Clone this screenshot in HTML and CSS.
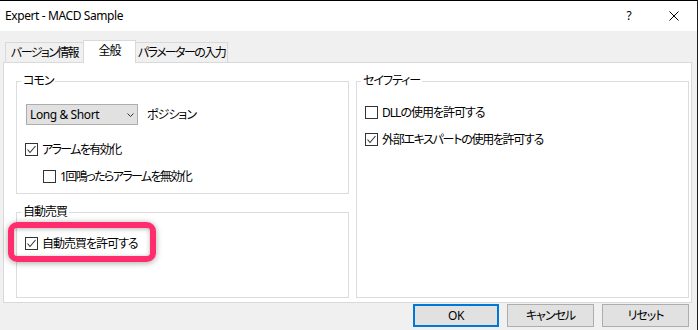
FILE: index.html
```html
<!DOCTYPE html>
<html lang="ja">
<head>
<meta charset="utf-8">
<title>Expert - MACD Sample</title>
<link rel="stylesheet" href="styles.css">
</head>
<body>
<div class="window">
  <div class="titlebar">
    <span class="title">Expert - MACD Sample</span>
    <span class="tb-btn help">?</span>
    <span class="tb-btn close"><svg width="10" height="10" viewBox="0 0 10 10"><path d="M0.5 0.5 L9.5 9.5 M9.5 0.5 L0.5 9.5" stroke="#000" stroke-width="1" fill="none"/></svg></span>
  </div>
  <div class="content">
    <div class="tabs">
      <div class="tab tab-version kana">バージョン情報</div>
      <div class="tab tab-general active ja">全般</div>
      <div class="tab tab-params kana">パラメーターの入力</div>
    </div>
    <div class="panel">
      <div class="col">
        <fieldset class="group group-common">
          <legend class="ja">コモン</legend>
          <div class="select-row">
            <div class="select"><span>Long &amp; Short</span><svg width="7" height="4" viewBox="0 0 7 4"><path d="M0.5 0.5 L3.5 3.5 L6.5 0.5" stroke="#333" stroke-width="1" fill="none"/></svg></div>
            <span class="select-label ja">ポジション</span>
          </div>
          <div class="cb cb-first"><span class="box"><svg width="11" height="11" viewBox="0 0 11 11"><path d="M1.5 5.5 L4 8.5 L9.5 2" stroke="#333" stroke-width="1.1" fill="none"/></svg></span><span class="kana">アラームを有効化</span></div>
          <div class="cb cb-indent"><span class="box"></span><span class="kana">1回鳴ったらアラームを無効化</span></div>
        </fieldset>
        <fieldset class="group group-auto">
          <legend class="ja">自動売買</legend>
          <div class="cb cb-top highlighted"><span class="highlight"></span><span class="box"><svg width="11" height="11" viewBox="0 0 11 11"><path d="M1.5 5.5 L4 8.5 L9.5 2" stroke="#333" stroke-width="1.1" fill="none"/></svg></span><span class="ja">自動売買を許可する</span></div>
        </fieldset>
      </div>
      <div class="col">
        <fieldset class="group group-safety">
          <legend class="ja">セイフティー</legend>
          <div class="cb cb-top"><span class="box"></span><span class="ja">DLLの使用を許可する</span></div>
          <div class="cb cb-next"><span class="box"><svg width="11" height="11" viewBox="0 0 11 11"><path d="M1.5 5.5 L4 8.5 L9.5 2" stroke="#333" stroke-width="1.1" fill="none"/></svg></span><span class="ja-tight">外部エキスパートの使用を許可する</span></div>
        </fieldset>
      </div>
    </div>
    <div class="buttons">
      <div class="btn btn-ok">OK</div>
      <div class="btn btn-wide ja">キャンセル</div>
      <div class="btn btn-wide ja">リセット</div>
    </div>
  </div>
</div>
</body>
</html>
```
FILE: styles.css
```css
* { box-sizing: border-box; }
html, body { margin: 0; padding: 0; }
body {
  width: 698px;
  height: 330px;
  overflow: hidden;
  background: #f0f0f0;
  font-family: "Noto Sans", "Noto Sans CJK JP", sans-serif;
  font-size: 12px;
  letter-spacing: -0.4px;
  color: #000;
  font-feature-settings: "palt" 1;
}
.ja { letter-spacing: -1px; }
.ja-tight { letter-spacing: -1.3px; }
.kana { letter-spacing: -1.6px; }
.window {
  width: 698px;
  height: 330px;
  border-top: 1px solid #000;
  border-right: 1px solid #1e1e1e;
  background: #f0f0f0;
}
.titlebar {
  height: 30px;
  background: #fff;
  display: grid;
  grid-template-columns: 1fr 46px 46px;
  align-items: center;
  padding-left: 5px;
}
.title { line-height: 16px; }
.tb-btn {
  height: 30px;
  display: flex;
  align-items: center;
  justify-content: center;
}
.help { font-size: 12px; line-height: 16px; padding-left: 2px; }
.close svg { display: block; }
.content { padding-top: 9px; }
.tabs {
  display: flex;
  align-items: flex-end;
  padding-left: 5px;
  height: 22px;
}
.tab {
  height: 20px;
  border: 1px solid #d9d9d9;
  border-bottom: none;
  background: #f0f0f0;
  line-height: 19px;
  text-align: center;
  white-space: nowrap;
}
.tab-version { width: 78px; border-right: none; }
.tab-general { width: 53px; }
.tab-params { width: 92px; border-left: none; }
.tab.active {
  height: 23px;
  margin-bottom: -1px;
  background: #fff;
  position: relative;
  z-index: 1;
}
.panel {
  margin-left: 3px;
  width: 689px;
  height: 241px;
  border: 1px solid #d9d9d9;
  background: #fff;
  display: flex;
  gap: 7px;
  padding: 10px 2px 4px 12px;
}
.col {
  width: 333px;
  display: flex;
  flex-direction: column;
  gap: 10px;
}
.group {
  margin: 0;
  min-width: 0;
  border: 1px solid #dcdcdc;
  padding: 15px 8px 8px 8px;
}
.group legend {
  margin-left: -4px;
  padding: 0 2px;
  line-height: 16px;
  height: 16px;
}
.group-auto, .group-safety { flex: 1; }
.select-row {
  display: flex;
  align-items: center;
  height: 21px;
}
.select {
  margin-left: 1px;
  width: 112px;
  height: 21px;
  border: 1px solid #adadad;
  background: #e1e1e1;
  display: flex;
  align-items: center;
  justify-content: space-between;
  padding: 0 3px 0 3px;
  line-height: 16px;
}
.select svg { display: block; margin-top: 1px; }
.select-label { margin-left: 9px; line-height: 16px; }
.cb {
  display: flex;
  align-items: center;
  height: 17px;
  line-height: 16px;
  white-space: nowrap;
}
.box {
  width: 13px;
  height: 13px;
  border: 1px solid #333;
  background: #fff;
  margin-right: 4px;
  flex: none;
  position: relative;
}
.box svg { display: block; position: absolute; left: 0; top: 0; }
.cb-first { margin-top: 16px; }
.cb-indent { margin-top: 10px; margin-left: 18px; }
.cb-next { margin-top: 10px; }
.highlighted { position: relative; }
.highlight {
  position: absolute;
  left: -17px;
  top: -13px;
  width: 148px;
  height: 40px;
  border: 6.5px solid #ff2d6e;
  border-radius: 9px;
  box-shadow: 0 1px 6px rgba(0,0,0,0.35), inset 0 1px 4px rgba(0,0,0,0.3);
  pointer-events: none;
}
.buttons {
  margin-top: 1px;
  display: flex;
  justify-content: flex-end;
  gap: 8px;
  padding-right: 8px;
}
.btn {
  width: 87px;
  height: 23px;
  border: 1px solid #adadad;
  background: #e1e1e1;
  display: flex;
  align-items: center;
  justify-content: center;
  line-height: 16px;
}
.btn-ok { width: 86px; border: 2px solid #0078d7; }
```
